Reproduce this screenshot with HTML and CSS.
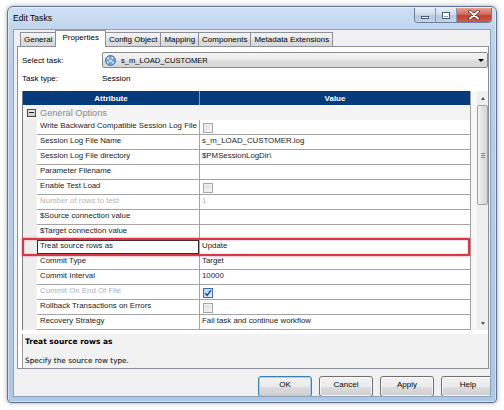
FILE: index.html
```html
<!DOCTYPE html>
<html>
<head>
<meta charset="utf-8">
<title>Edit Tasks</title>
<link rel="stylesheet" href="styles.css">
</head>
<body>
<div class="window">
  <div class="titlebar">
    <span class="title">Edit Tasks</span>
    <div class="caption-btns">
      <div class="cb cb-min"><span class="g-min"></span></div>
      <div class="cb cb-max"><span class="g-max"></span></div>
      <div class="cb cb-close">
        <svg width="12" height="10" viewBox="0 0 12 10"><path d="M2 1.5 L10 8.5 M10 1.5 L2 8.5" stroke="#5a1d1a" stroke-width="3.4" stroke-linecap="round"/><path d="M2 1.5 L10 8.5 M10 1.5 L2 8.5" stroke="#ffffff" stroke-width="2" stroke-linecap="round"/></svg>
      </div>
    </div>
  </div>
  <div class="client">
    <div class="tabs">
      <div class="tab">General</div>
      <div class="tab active">Properties</div>
      <div class="tab">Config Object</div>
      <div class="tab">Mapping</div>
      <div class="tab">Components</div>
      <div class="tab">Metadata Extensions</div>
    </div>
    <div class="panel">
      <div class="frow">
        <span class="lbl">Select task:</span>
        <div class="combo">
          <svg class="sess-icon" width="11" height="11" viewBox="0 0 11 11">
            <circle cx="5.5" cy="5.5" r="5" fill="#6fa3e0"/>
            <circle cx="5.5" cy="5.5" r="5" fill="none" stroke="#2d62b0" stroke-width="0.8"/>
            <circle cx="3.2" cy="3.4" r="1.1" fill="#e8f1fc"/>
            <circle cx="7.3" cy="3.1" r="1" fill="#e8f1fc"/>
            <circle cx="5.6" cy="6" r="1.2" fill="#e8f1fc"/>
            <circle cx="2.8" cy="7.4" r="0.9" fill="#e8f1fc"/>
            <circle cx="8" cy="7.6" r="1" fill="#e8f1fc"/>
          </svg>
          <span class="combo-text">s_m_LOAD_CUSTOMER</span>
          <span class="combo-arrow"></span>
        </div>
      </div>
      <div class="frow2">
        <span class="lbl">Task type:</span>
        <span class="static">Session</span>
      </div>
      <div class="grid">
        <div class="table">
          <div class="hdr">
            <div class="hc hc-attr">Attribute</div>
            <div class="hc hc-val">Value</div>
          </div>
          <div class="group"><span class="minus"></span><span class="group-text">General Options</span></div>
          <div class="row"><div class="ind"></div><div class="c ca">Write Backward Compatible Session Log File</div><div class="c cv"><span class="chk"></span></div></div>
          <div class="row"><div class="ind"></div><div class="c ca">Session Log File Name</div><div class="c cv">s_m_LOAD_CUSTOMER.log</div></div>
          <div class="row"><div class="ind"></div><div class="c ca">Session Log File directory</div><div class="c cv">$PMSessionLogDir\</div></div>
          <div class="row"><div class="ind"></div><div class="c ca">Parameter Filename</div><div class="c cv"></div></div>
          <div class="row"><div class="ind"></div><div class="c ca">Enable Test Load</div><div class="c cv"><span class="chk"></span></div></div>
          <div class="row"><div class="ind"></div><div class="c ca dis">Number of rows to test</div><div class="c cv dis">1</div></div>
          <div class="row"><div class="ind"></div><div class="c ca">$Source connection value</div><div class="c cv"></div></div>
          <div class="row"><div class="ind"></div><div class="c ca">$Target connection value</div><div class="c cv"></div></div>
          <div class="row sel"><div class="ind"></div><div class="c ca selcell">Treat source rows as</div><div class="c cv">Update</div></div>
          <div class="row"><div class="ind"></div><div class="c ca">Commit Type</div><div class="c cv">Target</div></div>
          <div class="row"><div class="ind"></div><div class="c ca">Commit Interval</div><div class="c cv">10000</div></div>
          <div class="row"><div class="ind"></div><div class="c ca dis2">Commit On End Of File</div><div class="c cv"><span class="chk checked"><svg width="8" height="8" viewBox="0 0 8 8"><path d="M1.2 4.2 L3.2 6.4 L6.9 1.2" fill="none" stroke="#1f4f8a" stroke-width="1.5"/></svg></span></div></div>
          <div class="row"><div class="ind"></div><div class="c ca">Rollback Transactions on Errors</div><div class="c cv"><span class="chk"></span></div></div>
          <div class="row"><div class="ind"></div><div class="c ca">Recovery Strategy</div><div class="c cv">Fail task and continue workflow</div></div>
        </div>
        <div class="vscroll">
          <div class="sb-btn"><span class="tri-up"></span></div>
          <div class="thumb"><span class="grip"></span></div>
          <div class="sb-track"></div>
          <div class="sb-btn"><span class="tri-down"></span></div>
        </div>
      </div>
      <div class="desc">
        <div class="desc-title">Treat source rows as</div>
        <div class="desc-text">Specify the source row type.</div>
      </div>
    </div>
    <div class="buttons">
      <div class="btn default">OK</div>
      <div class="btn">Cancel</div>
      <div class="btn">Apply</div>
      <div class="btn">Help</div>
    </div>
  </div>
</div>
</body>
</html>
```

FILE: styles.css
```css
* { box-sizing: border-box; margin: 0; padding: 0; }
html, body { width: 504px; height: 410px; overflow: hidden; }
body {
  background: #ffffff;
  font-family: "Liberation Sans", Arial, sans-serif;
  font-size: 8px;
  color: #000;
}

.window {
  margin: 6px 0 0 7px;
  width: 490px;
  height: 397px;
  border: 1px solid #5d7190;
  border-radius: 6px 6px 4px 4px;
  background: linear-gradient(180deg, #cfe0f3 0, #c2d7ee 20px, #b6cee9 60px, #adc7e4 100%);
  box-shadow: 0 0 5px rgba(0,0,0,.35), inset 0 0 0 1px rgba(255,255,255,.45);
  padding: 0 5px 5px;
  display: flex;
  flex-direction: column;
}

.titlebar {
  height: 22px;
  display: flex;
  align-items: flex-start;
}
.title {
  font-size: 8.6px;
  color: #000;
  line-height: 22px;
}
.caption-btns {
  margin-left: auto;
  margin-right: -1px;
  margin-top: 1px;
  display: flex;
  height: 15px;
  border: 1px solid #6a7fa0;
  border-top: none;
  border-radius: 0 0 4px 4px;
  overflow: hidden;
}
.cb {
  height: 100%;
  display: flex;
  align-items: center;
  justify-content: center;
}
.cb-min, .cb-max {
  width: 21px;
  background: linear-gradient(180deg, #e6eef7 0, #d0ddec 45%, #b6c9df 55%, #c3d5e8 100%);
  border-right: 1px solid #8096b3;
}
.cb-close {
  width: 34px;
  background: linear-gradient(180deg, #e8a093 0, #d46d5f 45%, #c0402f 55%, #cf5e4c 100%);
}
.g-min {
  width: 8px;
  height: 3px;
  background: #fff;
  border: 1px solid #4a5a70;
  margin-top: 5px;
}
.g-max {
  width: 8px;
  height: 7px;
  border: 1px solid #4a5a70;
  box-shadow: inset 0 0 0 1px #fff, inset 0 2px 0 1px #fff;
  background: #8ea3c0;
}

.client {
  height: 368px;
  background: #f0f0f0;
  border: 1px solid #8ea3be;
  display: flex;
  flex-direction: column;
  overflow: hidden;
}

.tabs {
  height: 18px;
  display: flex;
  align-items: flex-end;
  padding-left: 6px;
}
.tab {
  height: 14px;
  padding: 0 3px;
  border: 1px solid #8d9099;
  border-bottom: none;
  margin-right: -1px;
  background: linear-gradient(180deg, #f5f5f5, #e6e6e6 50%, #dcdcdc 50%, #d9d9d9);
  font-size: 8px;
  line-height: 13px;
  white-space: nowrap;
  position: relative;
}
.tab.active {
  height: 17px;
  margin-bottom: -1px;
  padding: 0 6px;
  background: #ffffff;
  line-height: 14px;
  z-index: 1;
}

.panel {
  height: 328px;
  margin: 0 1px 0 3px;
  border: 1px solid #8d9099;
  background: #ffffff;
  padding: 5px 0 0 4px;
  display: flex;
  flex-direction: column;
}

.frow {
  height: 16px;
  display: flex;
  align-items: center;
  margin-bottom: 3px;
}
.lbl {
  width: 80px;
  font-size: 8px;
  flex-shrink: 0;
}
.combo {
  flex: 1;
  height: 16px;
  border: 1px solid #8a8a8a;
  border-radius: 2px;
  background: linear-gradient(180deg, #f4f4f4 0, #ebebeb 50%, #dedede 51%, #d6d6d6 100%);
  display: flex;
  align-items: center;
  padding-left: 2px;
}
.sess-icon { flex-shrink: 0; }
.combo-text {
  font-size: 7.6px;
  margin-left: 5px;
}
.combo-arrow {
  margin-left: auto;
  margin-right: 3px;
  width: 0;
  height: 0;
  border-left: 3px solid transparent;
  border-right: 3px solid transparent;
  border-top: 3px solid #000;
}

.frow2 {
  height: 14px;
  display: flex;
  align-items: center;
  margin-bottom: 6px;
}
.static {
  font-size: 8px;
}

.grid {
  height: 239px;
  display: flex;
  flex-shrink: 0;
}
.table {
  width: 449px;
  display: flex;
  flex-direction: column;
  border-left: 1px solid #7d7d7d;
  border-right: 1px solid #a0a0a0;
}
.hdr {
  height: 14px;
  display: flex;
  background: #063b7b;
  color: #fff;
  font-weight: bold;
  font-size: 8px;
}
.hc {
  display: flex;
  align-items: center;
  justify-content: center;
}
.hc-attr {
  width: 177px;
  border-right: 1px solid #7f97b8;
}
.hc-val { flex: 1; }

.group {
  height: 15px;
  background: #f4f4f4;
  display: flex;
  align-items: center;
}
.minus {
  width: 9px;
  height: 8px;
  margin-left: 4px;
  border: 1px solid #4a4a4a;
  background: linear-gradient(180deg, #e9e9e9, #c9c9c9);
  display: flex;
  align-items: center;
  justify-content: center;
}
.minus::before {
  content: "";
  width: 5px;
  height: 1px;
  background: #222;
}
.group-text {
  margin-left: 4px;
  font-size: 9.2px;
  color: #8a8a8a;
}

.row {
  height: 15px;
  display: flex;
}
.ind {
  width: 14px;
  background: #eeeeee;
  flex-shrink: 0;
}
.c {
  height: 15px;
  border-bottom: 1px solid #a4a4a4;
  font-size: 7.85px;
  line-height: 12px;
  color: #1a1a1a;
  white-space: nowrap;
  overflow: hidden;
  display: flex;
  align-items: flex-start;
}
.ca {
  width: 163px;
  border-right: 1px solid #a4a4a4;
  padding-left: 3px;
}
.cv {
  flex: 1;
  padding-left: 2px;
}
.dis { color: #b4b4b4; }
.dis2 { color: #a9b1c6; }

.chk {
  width: 10px;
  height: 10px;
  margin-top: 3px;
  margin-left: 1px;
  border: 1px solid #a6a6a6;
  background: linear-gradient(135deg, #dcdcdc, #f6f6f6);
  box-shadow: inset 0 0 0 1px #f0f0f0;
  display: flex;
  align-items: center;
  justify-content: center;
}
.chk.checked {
  border-color: #3c6fa8;
  background: linear-gradient(135deg, #b5d2f0, #e4effa);
  box-shadow: none;
}

.row.sel { position: relative; }
.row.sel::after {
  content: "";
  position: absolute;
  left: -1px;
  right: 0;
  top: -2px;
  bottom: -1px;
  border: 2px solid #d63a48;
  box-shadow: 0 0 2px rgba(214,58,72,.7), inset 0 0 2px rgba(214,58,72,.5);
  pointer-events: none;
}
.selcell {
  box-shadow: inset 0 0 0 1px #2a2a2a;
}

.vscroll {
  width: 17px;
  padding-left: 6px;
  background: #f7f7f7;
  display: flex;
  flex-direction: column;
}
.sb-btn {
  height: 14px;
  display: flex;
  align-items: center;
  justify-content: center;
  background: #efefef;
}
.tri-up, .tri-down {
  width: 0;
  height: 0;
  border-left: 2.5px solid transparent;
  border-right: 2.5px solid transparent;
}
.tri-up { border-bottom: 3px solid #555; }
.tri-down { border-top: 3px solid #555; }
.thumb {
  height: 100px;
  border: 1px solid #a2a2a2;
  border-radius: 2px;
  background: linear-gradient(90deg, #f2f2f2, #e2e2e2 50%, #d6d6d6);
  display: flex;
  align-items: center;
  justify-content: center;
}
.grip {
  width: 4px;
  height: 5px;
  border-top: 1px solid #888;
  border-bottom: 1px solid #888;
  display: flex;
  align-items: center;
}
.grip::before {
  content: "";
  width: 4px;
  height: 1px;
  background: #888;
}
.sb-track {
  flex: 1;
  background: #efefef;
}

.desc {
  height: 34px;
  margin-top: 4px;
  background: #f2f2f2;
  border-left: 1px solid #9a9a9a;
  padding-left: 2px;
  display: flex;
  flex-direction: column;
  flex-shrink: 0;
}
.desc-title {
  font-family: "DejaVu Sans", sans-serif;
  font-weight: bold;
  font-size: 7.5px;
  line-height: 9px;
  margin-top: 3px;
}
.desc-text {
  font-family: "DejaVu Sans", sans-serif;
  font-size: 7.3px;
  line-height: 9px;
  margin-top: 10px;
}

.buttons {
  margin-top: 7px;
  padding-left: 244px;
  display: flex;
  gap: 7px;
}
.btn {
  width: 54px;
  height: 21px;
  flex-shrink: 0;
  border: 1px solid #707070;
  border-radius: 3px;
  background: linear-gradient(180deg, #f2f2f2 0, #ebebeb 50%, #dddddd 51%, #cfcfcf 100%);
  box-shadow: inset 0 0 0 1px rgba(255,255,255,.7);
  font-size: 8px;
  text-align: center;
  padding-top: 3px;
  line-height: 10px;
}
.btn.default {
  border-color: #3c7fb1;
  box-shadow: inset 0 0 0 1px #9cd6f4;
}
```
